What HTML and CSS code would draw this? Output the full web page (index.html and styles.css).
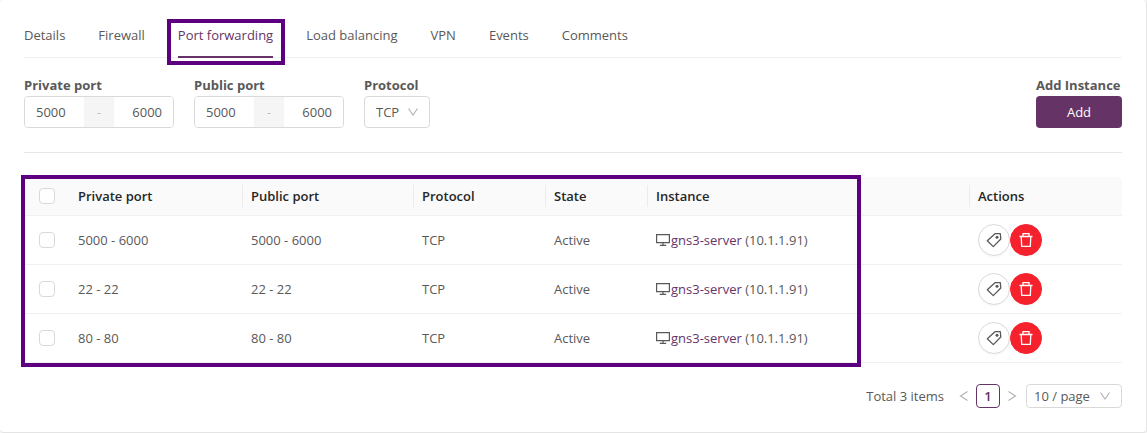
FILE: index.html
```html
<!DOCTYPE html>
<html lang="en">
<head>
  <meta charset="UTF-8" />
  <meta name="viewport" content="width=device-width, initial-scale=1.0"/>
  <title>Port forwarding</title>
  <link rel="stylesheet" href="styles.css">
</head>
<body>

  <!-- Shared icons -->
  <svg class="sprite" aria-hidden="true">
    <symbol id="icon-down" viewBox="0 0 12 12"><path d="M1.500 2.500 6 9l4.500-6.500" fill="none" stroke="currentColor" stroke-width="1.200"/></symbol>
    <symbol id="icon-left" viewBox="0 0 12 12"><path d="M9.500 1.500 2.500 6l7 4.500" fill="none" stroke="currentColor" stroke-width="1.200"/></symbol>
    <symbol id="icon-right" viewBox="0 0 12 12"><path d="M2.500 1.500 9.500 6l-7 4.500" fill="none" stroke="currentColor" stroke-width="1.200"/></symbol>
    <symbol id="icon-desktop" viewBox="0 0 14 14">
      <path d="M.6 1.600h12.800v8H.6zM7 9.600v2.600M3.800 12.400h6.400" fill="none" stroke="currentColor" stroke-width="1.200"/>
    </symbol>
    <symbol id="icon-tag" viewBox="0 0 16 16">
      <path d="M9 1.700 14.300 1.700 14.800 7 7.300 14.600 1.300 8.800z" fill="none" stroke="currentColor" stroke-width="1.300" stroke-linejoin="round"/>
      <circle cx="11" cy="5.200" r="1.500" fill="currentColor"/>
    </symbol>
    <symbol id="icon-trash" viewBox="0 0 16 16">
      <path d="M1.500 4.500h13M5 4.300V1.700h6v2.600M3.200 4.500l.5 9.800h8.600l.5-9.800" fill="none" stroke="currentColor" stroke-width="1.300"/>
    </symbol>
  </svg>

  <main class="card">

    <!-- Tabs -->
    <nav class="tabs">
      <a href="#details" class="tab">Details</a>
      <a href="#firewall" class="tab">Firewall</a>
      <a href="#port-forwarding" class="tab active">Port forwarding</a>
      <a href="#load-balancing" class="tab">Load balancing</a>
      <a href="#vpn" class="tab">VPN</a>
      <a href="#events" class="tab">Events</a>
      <a href="#comments" class="tab">Comments</a>
    </nav>

    <!-- New rule form -->
    <form class="rule-form">
      <div class="field">
        <label for="private-start">Private port</label>
        <div class="port-range">
          <input type="text" id="private-start" value="5000">
          <span class="dash">-</span>
          <input type="text" class="end" value="6000" aria-label="Private port end">
        </div>
      </div>
      <div class="field">
        <label for="public-start">Public port</label>
        <div class="port-range">
          <input type="text" id="public-start" value="5000">
          <span class="dash">-</span>
          <input type="text" class="end" value="6000" aria-label="Public port end">
        </div>
      </div>
      <div class="field">
        <label for="protocol">Protocol</label>
        <div class="select protocol">
          <select id="protocol"><option>TCP</option><option>UDP</option></select>
          <svg><use href="#icon-down"/></svg>
        </div>
      </div>
      <div class="field add-field">
        <label for="add">Add Instance</label>
        <button type="button" id="add" class="add-button">Add</button>
      </div>
    </form>

    <!-- Rules table -->
    <div class="table-wrap">
      <table>
        <colgroup>
          <col class="col-check">
          <col class="col-private">
          <col class="col-public">
          <col class="col-protocol">
          <col class="col-state">
          <col>
          <col class="col-actions">
        </colgroup>
        <thead>
          <tr>
            <th><input type="checkbox" aria-label="Select all"></th>
            <th>Private port</th>
            <th>Public port</th>
            <th>Protocol</th>
            <th>State</th>
            <th>Instance</th>
            <th>Actions</th>
          </tr>
        </thead>
        <tbody>
          <tr>
            <td><input type="checkbox" aria-label="Select 5000 - 6000"></td>
            <td>5000 - 6000</td>
            <td>5000 - 6000</td>
            <td>TCP</td>
            <td>Active</td>
            <td><div class="instance"><svg><use href="#icon-desktop"/></svg><a href="#gns3-server">gns3-server</a>&nbsp;(10.1.1.91)</div></td>
            <td>
              <div class="actions">
                <button type="button" class="round" aria-label="Tags"><svg><use href="#icon-tag"/></svg></button>
                <button type="button" class="round danger" aria-label="Delete"><svg><use href="#icon-trash"/></svg></button>
              </div>
            </td>
          </tr>
          <tr>
            <td><input type="checkbox" aria-label="Select 22 - 22"></td>
            <td>22 - 22</td>
            <td>22 - 22</td>
            <td>TCP</td>
            <td>Active</td>
            <td><div class="instance"><svg><use href="#icon-desktop"/></svg><a href="#gns3-server">gns3-server</a>&nbsp;(10.1.1.91)</div></td>
            <td>
              <div class="actions">
                <button type="button" class="round" aria-label="Tags"><svg><use href="#icon-tag"/></svg></button>
                <button type="button" class="round danger" aria-label="Delete"><svg><use href="#icon-trash"/></svg></button>
              </div>
            </td>
          </tr>
          <tr>
            <td><input type="checkbox" aria-label="Select 80 - 80"></td>
            <td>80 - 80</td>
            <td>80 - 80</td>
            <td>TCP</td>
            <td>Active</td>
            <td><div class="instance"><svg><use href="#icon-desktop"/></svg><a href="#gns3-server">gns3-server</a>&nbsp;(10.1.1.91)</div></td>
            <td>
              <div class="actions">
                <button type="button" class="round" aria-label="Tags"><svg><use href="#icon-tag"/></svg></button>
                <button type="button" class="round danger" aria-label="Delete"><svg><use href="#icon-trash"/></svg></button>
              </div>
            </td>
          </tr>
        </tbody>
      </table>
    </div>

    <!-- Pagination -->
    <div class="pagination">
      <span class="total">Total 3 items</span>
      <button type="button" class="page-arrow" aria-label="Previous page" disabled><svg><use href="#icon-left"/></svg></button>
      <button type="button" class="page-number">1</button>
      <button type="button" class="page-arrow" aria-label="Next page" disabled><svg><use href="#icon-right"/></svg></button>
      <div class="select page-size">
        <select aria-label="Page size"><option>10 / page</option><option>20 / page</option></select>
        <svg><use href="#icon-down"/></svg>
      </div>
    </div>

  </main>

</body>
</html>
```

FILE: styles.css
```css
* {
  box-sizing: border-box;
  margin: 0;
  padding: 0;
}

body {
  background: #f5f5f5;
  color: #595959;
  font-family: "Open Sans", "Noto Sans", sans-serif;
  font-size: 13px;
  line-height: 22px;
}

input,
select,
button {
  font: inherit;
  color: inherit;
}

button {
  cursor: pointer;
}

a {
  color: #663366;
  text-decoration: none;
}

.sprite {
  display: none;
}

.card {
  background: #fff;
  border-right: 1px solid #e4e4e4;
  border-bottom: 1px solid #e4e4e4;
  border-radius: 4px;
  padding: 12px 24px 24px;
}

/* tabs */
.tabs {
  display: flex;
  gap: 33px;
  border-bottom: 1px solid #f0f0f0;
}

.tab {
  position: relative;
  padding: 12px 0 11px;
  color: #595959;
}

.tab.active {
  color: #663366;
  box-shadow: 0 1px 0 #663366, inset 0 -1px 0 #663366;
}

.tab.active::after {
  content: "";
  position: absolute;
  inset: 7px -12px -8px -11px;
  border: 4px solid #5c0080;
}

/* form */
.rule-form {
  display: flex;
  gap: 20px;
  padding: 16px 0 24px;
  border-bottom: 1px solid #e6e6e6;
}

.field {
  display: flex;
  flex-direction: column;
}

.field label {
  font-weight: 700;
}

.add-field {
  width: 86px;
  margin-left: auto;
}

.port-range {
  display: flex;
  width: 150px;
  height: 32px;
  border: 1px solid #d9d9d9;
  border-radius: 4px;
  overflow: hidden;
}

.port-range input {
  flex: 1;
  min-width: 0;
  border: none;
  padding: 0 11px;
  background: #fff;
}

.port-range .end {
  text-align: right;
}

.port-range .dash {
  width: 30px;
  line-height: 30px;
  text-align: center;
  background: #f5f5f5;
  color: #bfbfbf;
}

.select {
  position: relative;
  border: 1px solid #d9d9d9;
  border-radius: 4px;
}

.select select {
  display: block;
  width: 100%;
  height: 100%;
  border: none;
  background: transparent;
  appearance: none;
}

.select svg {
  position: absolute;
  top: 50%;
  right: 10px;
  width: 12px;
  height: 12px;
  margin-top: -6px;
  color: #b5b5b5;
  pointer-events: none;
}

.protocol {
  width: 66px;
  height: 32px;
}

.protocol select {
  padding: 0 11px;
}

.add-button {
  height: 32px;
  border: none;
  border-radius: 4px;
  background: #663366;
  color: #fff;
}

/* table */
.table-wrap {
  position: relative;
  margin-top: 24px;
}

.table-wrap::after {
  content: "";
  position: absolute;
  inset: -2px 261px -4px -3px;
  border: 4px solid #5c0080;
  pointer-events: none;
}

table {
  width: 100%;
  table-layout: fixed;
  border-collapse: separate;
  border-spacing: 0;
}

.col-check { width: 46px; }
.col-private { width: 173px; }
.col-public { width: 171px; }
.col-protocol { width: 132px; }
.col-state { width: 102px; }
.col-actions { width: 152px; }

th,
td {
  padding: 8px;
  border-bottom: 1px solid #f0f0f0;
  text-align: left;
  vertical-align: middle;
}

th {
  position: relative;
  background: #fafafa;
  color: #262626;
  font-weight: 600;
}

th:first-child {
  border-top-left-radius: 4px;
}

th:last-child {
  border-top-right-radius: 4px;
}

/* divider between header cells */
th:not(:first-child):not(:last-child)::after {
  content: "";
  position: absolute;
  top: 8px;
  right: 0;
  bottom: 8px;
  width: 1px;
  background: #ebebeb;
}

input[type="checkbox"] {
  display: block;
  width: 16px;
  height: 16px;
  margin: 0 auto;
  border: 1px solid #d9d9d9;
  border-radius: 4px;
  background: #fff;
  appearance: none;
}

.instance {
  display: flex;
  align-items: center;
}

.instance svg {
  width: 14px;
  height: 14px;
  margin-right: 1px;
}

.actions {
  display: flex;
}

.round {
  display: flex;
  align-items: center;
  justify-content: center;
  width: 32px;
  height: 32px;
  border: 1px solid #d9d9d9;
  border-radius: 50%;
  background: #fff;
  box-shadow: 0 2px 0 rgba(0, 0, 0, 0.02);
}

.round svg {
  width: 16px;
  height: 16px;
}

.round.danger {
  border-color: #f5222d;
  background: #f5222d;
  color: #fff;
}

/* pagination */
.pagination {
  display: flex;
  align-items: center;
  justify-content: flex-end;
  margin-top: 21px;
}

.total {
  margin-right: 8px;
}

.page-arrow,
.page-number {
  display: flex;
  align-items: center;
  justify-content: center;
  width: 24px;
  height: 24px;
  border: none;
  background: none;
}

.page-arrow {
  color: #b5b5b5;
}

.page-arrow svg {
  width: 12px;
  height: 12px;
}

.page-number {
  border: 1px solid #663366;
  border-radius: 4px;
  color: #663366;
  font-weight: 600;
}

.page-size {
  width: 96px;
  height: 24px;
  margin-left: 2px;
}

.page-size select {
  padding: 0 7px;
}
```
